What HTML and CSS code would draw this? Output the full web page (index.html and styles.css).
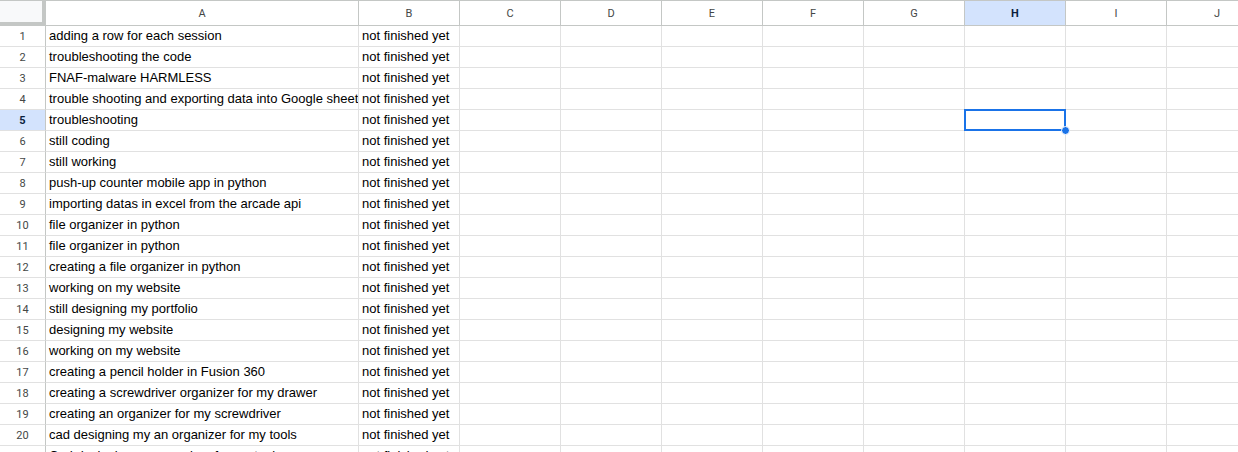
FILE: index.html
```html
<!DOCTYPE html>
<html>
<head>
<meta charset="utf-8">
<link rel="stylesheet" href="styles.css">
</head>
<body>
<div class="sheet">
  <div class="row head">
    <div class="corner"></div>
    <div class="ch">A</div><div class="ch">B</div><div class="ch">C</div><div class="ch">D</div><div class="ch">E</div><div class="ch">F</div><div class="ch">G</div><div class="ch sel">H</div><div class="ch">I</div><div class="ch">J</div>
  </div>
  <div id="rows"></div>
  <div class="selbox"></div>
  <div class="handle"></div>
</div>
<script src="app.js"></script>
</body>
</html>
```

FILE: app.js
```js
const data = [
  "adding a row for each session",
  "troubleshooting the code",
  "FNAF-malware HARMLESS",
  "trouble shooting and exporting data into Google sheets",
  "troubleshooting",
  "still coding",
  "still working",
  "push-up counter mobile app in python",
  "importing datas in excel from the arcade api",
  "file organizer in python",
  "file organizer in python",
  "creating a file organizer in python",
  "working on my website",
  "still designing my portfolio",
  "designing my website",
  "working on my website",
  "creating a pencil holder in Fusion 360",
  "creating a screwdriver organizer for my drawer",
  "creating an organizer for my screwdriver",
  "cad designing my an organizer for my tools",
  "Cad designing my organizer for my tools"
];
const rows = document.getElementById('rows');
data.forEach((t, i) => {
  const r = document.createElement('div');
  r.className = 'row';
  let html = '<div class="rh' + (i === 4 ? ' sel' : '') + '">' + (i + 1) + '</div>';
  html += '<div class="c">' + t + '</div><div class="c">not finished yet</div>';
  for (let k = 0; k < 8; k++) html += '<div class="c"></div>';
  r.innerHTML = html;
  rows.appendChild(r);
});
```

FILE: styles.css
```css
html, body {
  margin: 0;
  padding: 0;
  background: #fff;
  overflow: hidden;
}
.sheet {
  position: relative;
  width: 1268px;
  font-family: "Liberation Sans", Arial, sans-serif;
}
.row {
  display: grid;
  grid-template-columns: 46px 313px repeat(9, 101px);
  height: 21px;
}
.row.head {
  height: 26px;
  border-top: 1px solid #c4c7c5;
  box-sizing: border-box;
}
.corner {
  background: #f8f9fa;
  border-right: 4px solid #c4c7c5;
  border-bottom: 4px solid #c4c7c5;
  box-sizing: border-box;
  height: 25px;
}
.ch {
  box-sizing: border-box;
  border-right: 1px solid #c4c7c5;
  border-bottom: 1px solid #c4c7c5;
  font-family: Roboto, "Liberation Sans", Arial, sans-serif;
  font-size: 11px;
  color: #444746;
  display: flex;
  align-items: center;
  justify-content: center;
  height: 25px;
}
.ch.sel, .rh.sel {
  background: #d3e3fd;
  color: #0b1f3d;
  font-weight: bold;
}
.rh {
  box-sizing: border-box;
  border-right: 1px solid #c4c7c5;
  border-bottom: 1px solid #e1e1e1;
  font-family: Roboto, "Liberation Sans", Arial, sans-serif;
  font-size: 11px;
  color: #444746;
  display: flex;
  align-items: center;
  justify-content: center;
}
.c {
  box-sizing: border-box;
  border-right: 1px solid #e1e1e1;
  border-bottom: 1px solid #e1e1e1;
  font-size: 13px;
  color: #000;
  padding: 0 3px;
  line-height: 20px;
  white-space: nowrap;
  overflow: hidden;
}
.selbox {
  position: absolute;
  left: 964px;
  top: 109px;
  width: 102px;
  height: 22px;
  box-sizing: border-box;
  border: 2px solid #1a73e8;
}
.handle {
  position: absolute;
  left: 1061px;
  top: 126px;
  width: 9px;
  height: 9px;
  box-sizing: border-box;
  border-radius: 50%;
  background: #1a73e8;
  border: 1px solid #fff;
}
```
